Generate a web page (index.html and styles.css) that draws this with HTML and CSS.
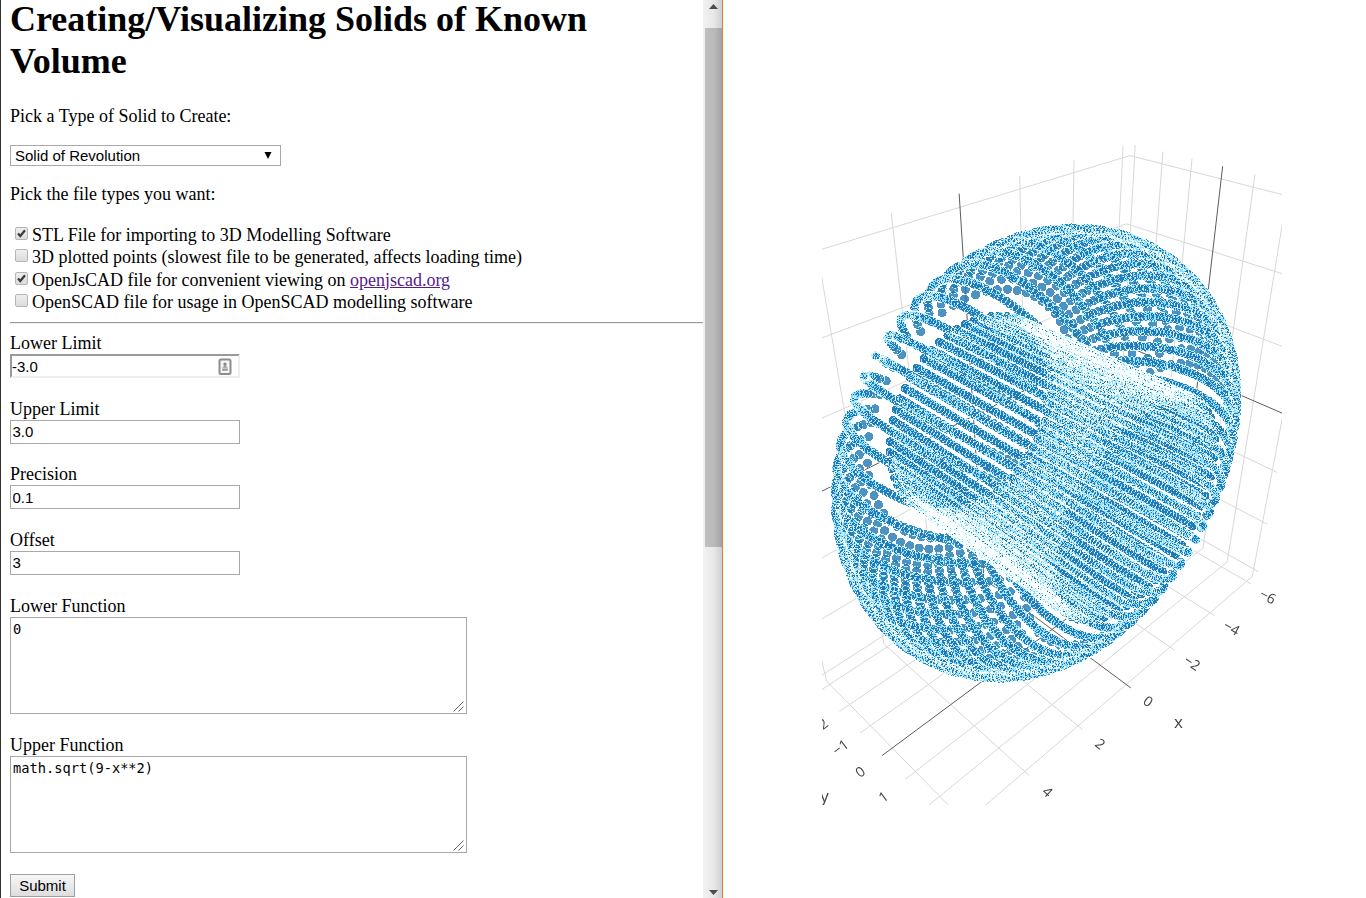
FILE: index.html
```html
<!DOCTYPE html>
<html lang="en">
<head>
<meta charset="utf-8">
<title>Creating/Visualizing Solids of Known Volume</title>
<link rel="stylesheet" href="styles.css">
</head>
<body class="page">
<main class="form-pane">
  <h1 class="title">Creating/Visualizing Solids of Known Volume</h1>
  <p class="prompt">Pick a Type of Solid to Create:</p>
  <div class="select"><span>Solid of Revolution</span><svg width="8" height="8" viewBox="0 0 8 8"><path d="M.5 0h7L4 7z"/></svg></div>
  <p class="prompt prompt-files">Pick the file types you want:</p>
  <div class="options">
    <label class="option"><span class="check"><svg width="11" height="11" viewBox="0 0 11 11"><path d="M2 5.4 4.3 8 9 2.2" fill="none" stroke="#3c3c3c" stroke-width="2.2"/></svg></span>STL File for importing to 3D Modelling Software</label>
    <label class="option"><span class="check"></span>3D plotted points (slowest file to be generated, affects loading time)</label>
    <label class="option"><span class="check"><svg width="11" height="11" viewBox="0 0 11 11"><path d="M2 5.4 4.3 8 9 2.2" fill="none" stroke="#3c3c3c" stroke-width="2.2"/></svg></span><span>OpenJsCAD file for convenient viewing on <a class="link" href="#">openjscad.org</a></span></label>
    <label class="option"><span class="check"></span>OpenSCAD file for usage in OpenSCAD modelling software</label>
  </div>
  <hr class="rule">
  <div class="field"><label>Lower Limit</label>
    <div class="input-wrap"><input class="input input-inset" value="-3.0"><svg class="autofill" width="14" height="18" viewBox="0 0 14 18"><rect x="1.5" y="1.5" width="11" height="14.5" rx="1.5" fill="#f4f4f4" stroke="#8d8d8d" stroke-width="2"/><circle cx="7" cy="6.2" r="1.6" fill="#888"/><path d="M4.2 9.7 7 7l2.800 2.700zM4.200 10.500h5.600v2.300H4.200z" fill="#999"/></svg></div></div>
  <div class="field"><label>Upper Limit</label><input class="input" value="3.0"></div>
  <div class="field"><label>Precision</label><input class="input" value="0.1"></div>
  <div class="field"><label>Offset</label><input class="input" value="3"></div>
  <div class="field-area"><label>Lower Function</label>
    <div class="area-wrap"><textarea class="area">0</textarea><svg class="grip" width="11" height="11" viewBox="0 0 11 11"><path d="M.5 10.500 10.500.5M5.500 10.500l5-5" stroke="#555" stroke-width=".9"/></svg></div></div>
  <div class="field-area"><label>Upper Function</label>
    <div class="area-wrap"><textarea class="area">math.sqrt(9-x**2)</textarea><svg class="grip" width="11" height="11" viewBox="0 0 11 11"><path d="M.5 10.500 10.500.5M5.500 10.500l5-5" stroke="#555" stroke-width=".9"/></svg></div></div>
  <button class="submit">Submit</button>
</main>
<div class="scrollbar">
  <svg class="arrow" width="9" height="5" viewBox="0 0 9 5"><path d="M0 5 4.500 0 9 5z"/></svg>
  <div class="thumb"></div>
  <svg class="arrow arrow-down" width="9" height="5" viewBox="0 0 9 5"><path d="M0 0h9L4.500 5z"/></svg>
</div>
<section class="plot-pane">
  <div class="plot">
    <canvas id="scene" class="scene" width="460" height="660"></canvas>
    <svg class="labels" width="520" height="660" viewBox="822 145 520 660">
      <g class="tick">
        <text transform="translate(1268 596) rotate(27)">−6</text>
        <text transform="translate(1232 627.500) rotate(29)">−4</text>
        <text transform="translate(1192.500 662.500) rotate(33)">−2</text>
        <text transform="translate(1148.500 701) rotate(36)">0</text>
        <text transform="translate(1100.500 743.500) rotate(39)">2</text>
        <text transform="translate(1048 791.500) rotate(43)">4</text>
        <text transform="translate(819.500 726) rotate(-38)">−2</text>
        <text transform="translate(840 747) rotate(-38)">−1</text>
        <text transform="translate(860 771.500) rotate(-37)">0</text>
        <text transform="translate(883 796.500) rotate(-36)">1</text>
      </g>
      <g class="axis"><text x="1178.500" y="721.500">x</text><text x="824.500" y="795.500">y</text></g>
    </svg>
  </div>
</section>
<script src="plot.js"></script>
</body>
</html>
```

FILE: styles.css
```css
.page{margin:0;display:flex;height:898px;overflow:hidden;background:#fff;font:18px/21px "Liberation Serif",serif;color:#000}
.form-pane{box-sizing:border-box;width:703px;flex:none;height:898px;overflow:hidden;border-left:1px solid #333;padding-left:9px}
.title{margin:-2px 0 24px;font-size:36px;line-height:42px;font-weight:bold;width:640px}
.prompt{margin:0}
.select{box-sizing:border-box;width:271px;height:21px;margin:18px 0 18px;border:1px solid #a9a9a9;padding:0 8px 0 4px;display:flex;align-items:center;justify-content:space-between;font:15px/19px "Liberation Sans",sans-serif}
.options{margin-top:20px;height:90px}
.option{display:flex;height:22.3px;white-space:pre}
.check{box-sizing:border-box;width:13px;height:13px;margin:2px 4px 0 5px;border:1px solid #b5b5b5;border-radius:2px;background:linear-gradient(#eee,#dcdcdc);display:flex;flex:none}
.link{color:#551a8b}
.rule{margin:7px 0 9px;border:0;border-top:1px solid #9a9a9a;border-bottom:1px solid #eee;height:0}
.field{height:65.67px;display:flex;flex-direction:column}
.input-wrap,.area-wrap{position:relative}
.input{box-sizing:border-box;display:block;width:230px;height:24px;margin:0;border:1px solid #a9a9a9;padding:1px 1.5px;font:15px "Liberation Sans",sans-serif;outline:0}
.input-inset{border:2px solid;border-color:#9a9a9a #eee #eee #9a9a9a;padding:1px 0}
.autofill{position:absolute;left:208px;top:4px}
.field-area{height:139px;display:flex;flex-direction:column}
.area-wrap{width:457px;height:97px}
.area{box-sizing:border-box;display:block;width:457px;height:97px;margin:0;border:1px solid #a9a9a9;padding:3px 2px;resize:none;font:13.700px/17px "DejaVu Sans Mono",monospace;outline:0}
.grip{position:absolute;right:3px;bottom:2px}
.submit{box-sizing:border-box;display:block;width:65px;height:23px;padding:0;border:1px solid #a0a0a0;background:linear-gradient(#f6f6f6,#dedede);font:15px "Liberation Sans",sans-serif;color:#000}
.scrollbar{box-sizing:border-box;width:20px;height:898px;flex:none;border-right:1px solid #d9833f;padding:4px 0 3px 2px;display:flex;flex-direction:column;align-items:center;background:linear-gradient(90deg,#f1f1f1,#e9e9e9 55%,#cfcfcf)}
.arrow{fill:#4c4c4c;flex:none}
.thumb{align-self:stretch;height:519px;margin-top:19px;background:linear-gradient(90deg,#c0c0c0,#b8b8b8 60%,#a2a2a2)}
.arrow-down{margin-top:auto}
.plot-pane{flex:1;padding:145px 0 0 99px;overflow:hidden}
.plot{position:relative;width:520px;height:660px}
.scene{display:block}
.labels{position:absolute;left:0;top:0}
.tick,.axis{font-family:"Open Sans",sans-serif;font-size:14px;fill:#444;text-anchor:middle;dominant-baseline:central}
.axis{font-size:17px}
```

FILE: plot.js
```js
// Camera: 3D data coordinates to page pixels
const P = [-54.42037, -0.9273601, -27.75878, 1052.11, 3.485531, 3.311395, -43.17342, 461.3409, -0.0261631, -0.02645243, -0.02639327];
const LEFT = 822, TOP = 145, W = 460, H = 660;
function project(x, y, z) {
  const w = 1 + P[8] * x + P[9] * y + P[10] * z;
  return [(P[0] * x + P[1] * y + P[2] * z + P[3]) / w - LEFT, (P[4] * x + P[5] * y + P[6] * z + P[7]) / w - TOP];
}
const ctx = document.getElementById('scene').getContext('2d');
ctx.fillStyle = '#fff';
ctx.fillRect(0, 0, W, H);

// Grid on the floor and the two back walls
const X = 6.33, Y = 3.17, Z = 6.33;
function line(a, b, zero) {
  ctx.strokeStyle = zero ? '#5c5c5c' : '#d8d8d8';
  ctx.lineWidth = 1;
  ctx.beginPath();
  ctx.moveTo(...project(...a));
  ctx.lineTo(...project(...b));
  ctx.stroke();
}
for (const pass of [false, true]) {
  for (let v = -6; v <= 6; v += 2) {
    if ((v === 0) !== pass) continue;
    line([v, -Y, -Z], [v, Y, -Z], pass);
    line([v, -Y, -Z], [v, -Y, Z], pass);
    line([-X, -Y, v], [X, -Y, v], pass);
    line([-X, -Y, v], [-X, Y, v], pass);
  }
  for (let v = -3; v <= 3; v++) {
    if ((v === 0) !== pass) continue;
    line([-X, v, -Z], [X, v, -Z], pass);
    line([-X, v, -Z], [-X, v, Z], pass);
  }
}

// Markers: count how many discs and outlines cover each pixel, then blend
let seed = 12345;
function random() {
  seed = (seed * 1664525 + 1013904223) >>> 0;
  return seed / 4294967296;
}
const fills = new Uint16Array(W * H), rings = new Uint16Array(W * H);
function marker(x, y, z) {
  const [cx, cy] = project(x, y, z);
  for (let py = Math.floor(cy - 6); py < cy + 6; py++) {
    for (let px = Math.floor(cx - 6); px < cx + 6; px++) {
      if (px < 0 || py < 0 || px >= W || py >= H) continue;
      const r = Math.hypot(px + 0.5 - cx, py + 0.5 - cy);
      if (r < 4.5) fills[py * W + px]++;
      else if (r < 5.2 && random() < 0.8) rings[py * W + px]++;
    }
  }
}
for (let i = -30; i <= 30; i++) {
  const y = i / 10, f = Math.sqrt(9 - y * y);
  for (let k = 0; k < 63; k++) {
    const c = Math.cos(k / 10), s = Math.sin(k / 10);
    marker(3 * c, y, 3 * s);
    marker((3 + f) * c, y, (3 + f) * s);
  }
}
const image = ctx.getImageData(0, 0, W, H), d = image.data;
const fill = [31, 119, 180], add = [112, 120, 120];
for (let i = 0; i < W * H; i++) {
  for (let c = 0; c < 3; c++) {
    const keep = Math.pow(0.2, fills[i]);
    let v = d[i * 4 + c] * keep + fill[c] * (1 - keep);
    for (let k = 0; k < rings[i]; k++) v = Math.min(255, v * 0.86 + add[c]);
    d[i * 4 + c] = v;
  }
}
ctx.putImageData(image, 0, 0);
```
